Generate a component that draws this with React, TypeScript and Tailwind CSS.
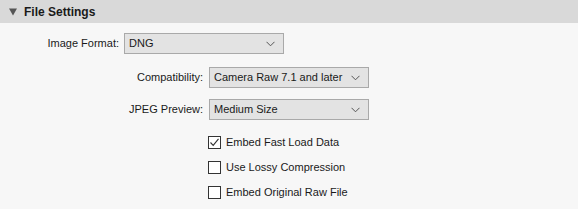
import React from "react";

function Chevron() {
  return (
    <svg width="9" height="6" viewBox="0 0 9 6" className="shrink-0">
      <path d="M0.5 0.8 L4.5 4.8 L8.5 0.8" fill="none" stroke="#555" strokeWidth="1" />
    </svg>
  );
}

function Select({ value }: { value: string }) {
  return (
    <div className="flex h-[21px] w-[160px] items-center justify-between border border-[#a9a9a9] bg-[#e3e3e3] pl-[4px] pr-[8px] text-[11px] text-[#1a1a1a]">
      <span className="whitespace-nowrap">{value}</span>
      <Chevron />
    </div>
  );
}

function Checkbox({ checked, label }: { checked?: boolean; label: string }) {
  return (
    <div className="flex h-[12px] items-center gap-[5px]">
      <div className="flex h-[13px] w-[13px] items-center justify-center border border-[#333] bg-white">
        {checked && (
          <svg width="11" height="11" viewBox="0 0 11 11">
            <path d="M1.5 5.5 L4.2 8.3 L9.5 1.8" fill="none" stroke="#333" strokeWidth="1.1" />
          </svg>
        )}
      </div>
      <span className="whitespace-nowrap text-[11px] text-[#1a1a1a]">{label}</span>
    </div>
  );
}

export default function App() {
  return (
    <div
      className="h-[209px] w-[578px] bg-[#f7f7f7]"
      style={{ fontFamily: "'Liberation Sans', Arial, sans-serif" }}
    >
      <div className="flex h-[23px] items-center bg-[#d9d9d9] pl-[9px]">
        <svg width="8" height="8" viewBox="0 0 8 8">
          <path d="M0 0.5 L8 0.5 L4 7.5 Z" fill="#555" />
        </svg>
        <span className="ml-[7px] text-[12px] font-bold text-[#1a1a1a]">File Settings</span>
      </div>

      <div className="flex items-center pt-[10px]">
        <div className="w-[119px] text-right text-[11px] text-[#1a1a1a]">Image Format:</div>
        <div className="ml-[5px]">
          <Select value="DNG" />
        </div>
      </div>

      <div className="mt-[13px] flex flex-col gap-[11px]">
        <div className="flex items-center">
          <div className="w-[203px] text-right text-[11px] text-[#1a1a1a]">Compatibility:</div>
          <div className="ml-[6px]">
            <Select value="Camera Raw 7.1 and later" />
          </div>
        </div>
        <div className="flex items-center">
          <div className="w-[203px] text-right text-[11px] text-[#1a1a1a]">JPEG Preview:</div>
          <div className="ml-[6px]">
            <Select value="Medium Size" />
          </div>
        </div>
      </div>

      <div className="ml-[208px] mt-[16px] flex flex-col gap-[13px]">
        <Checkbox checked label="Embed Fast Load Data" />
        <Checkbox label="Use Lossy Compression" />
        <Checkbox label="Embed Original Raw File" />
      </div>
    </div>
  );
}
